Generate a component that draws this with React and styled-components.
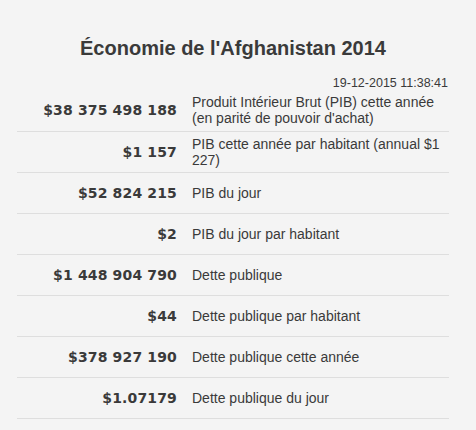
import React from 'react';
import styled, { createGlobalStyle } from 'styled-components';

const GlobalStyle = createGlobalStyle`
  html, body {
    margin: 0;
    padding: 0;
    background-color: #f4f4f4;
  }
  body {
    font-family: 'Liberation Sans', Arial, Helvetica, sans-serif;
    color: #3a3a3a;
  }
`;

const Wrapper = styled.section`
  width: 432px;
  margin-left: 17px;
  padding-top: 36px;
`;
const Title = styled.h1`
  margin: 0;
  font-size: 20px;
  line-height: 24px;
  font-weight: bold;
  text-align: center;
  color: #3a3a3a;
`;
const Stamp = styled.div`
  margin-top: 16px;
  font-size: 12.5px;
  line-height: 14px;
  text-align: right;
  padding-right: 1px;
`;
const Table = styled.table`
  width: 100%;
  border-collapse: collapse;
  table-layout: fixed;
`;
const Row = styled.tr`
  height: 41px;
  border-bottom: 1px solid #dedede;
`;
const Value = styled.td`
  width: 160px;
  padding: 4px 7px 4px 0;
  text-align: right;
  vertical-align: middle;
  font-family: 'DejaVu Sans', Verdana, sans-serif;
  font-weight: bold;
  font-size: 14px;
  letter-spacing: 0.15px;
  white-space: nowrap;
`;
const Label = styled.td`
  padding: 4px 4px 4px 8px;
  vertical-align: middle;
  font-size: 14px;
  line-height: 16px;
`;

const Stats = [
  { value: '$38 375 498 188', label: "Produit Intérieur Brut (PIB) cette année (en parité de pouvoir d'achat)" },
  { value: '$1 157', label: 'PIB cette année par habitant (annual $1 227)' },
  { value: '$52 824 215', label: 'PIB du jour' },
  { value: '$2', label: 'PIB du jour par habitant' },
  { value: '$1 448 904 790', label: 'Dette publique' },
  { value: '$44', label: 'Dette publique par habitant' },
  { value: '$378 927 190', label: 'Dette publique cette année' },
  { value: '$1.07179', label: 'Dette publique du jour' },
];

function App() {
  return (
    <>
      <GlobalStyle />
      <Wrapper>
        <Title>Économie de l'Afghanistan 2014</Title>
        <Stamp>19-12-2015 11:38:41</Stamp>
        <Table>
          <tbody>
            {Stats.map((s) => (
              <Row key={s.label}>
                <Value>{s.value}</Value>
                <Label>{s.label}</Label>
              </Row>
            ))}
          </tbody>
        </Table>
      </Wrapper>
    </>
  );
}

export default App;
